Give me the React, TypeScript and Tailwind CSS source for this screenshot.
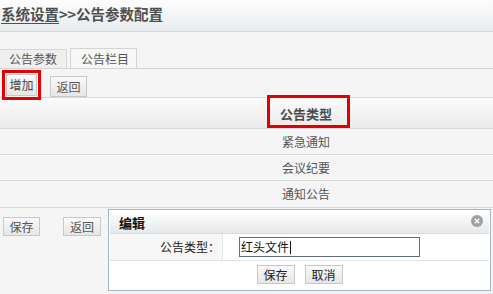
import React from "react";

const btn =
  "flex items-center justify-center border border-[#c8c8c8] bg-gradient-to-b from-[#fafafa] to-[#e6e6e6] text-[12px] leading-none";

export default function App() {
  return (
    <div
      className="w-[493px] h-[294px] overflow-hidden bg-[#f5f5f5] text-[#555]"
      style={{ fontFamily: '"Noto Sans CJK SC", "Noto Sans", sans-serif' }}
    >
      {/* Header */}
      <div className="h-[32px] bg-gradient-to-b from-[#fdfdfd] to-[#e8ebed] border-b border-[#d4d6d8] pl-[1px] pt-[4px]">
        <div className="text-[14.5px] font-bold leading-[20px] text-[#505050]">
          <span className="underline underline-offset-[3px]">系统设置</span>
          <span>&gt;&gt;公告参数配置</span>
        </div>
      </div>

      {/* Tabs */}
      <div className="pt-[16px] border-b border-[#d4d4d4] flex items-end">
        <div className="w-[67px] h-[19px] border-t border-r border-[#d8d8d8] bg-[#efefef] flex items-center pl-[9px] text-[12px] leading-none">
          公告参数
        </div>
        <div className="ml-[3px] w-[67px] h-[20px] border-t border-l border-r border-[#d4d4d4] bg-[#f7f7f7] flex items-center pl-[10px] text-[12px] leading-none">
          公告栏目
        </div>
      </div>

      {/* Button row */}
      <div className="h-[29px] border-b border-[#d8d8d8] flex items-start">
        <div className="relative z-10 mt-[1px] ml-[2px] w-[39px] h-[30px] shrink-0 border-[3px] border-[#e30000] p-[1px]">
          <div className={btn + " w-full h-full text-[#444]"}>增加</div>
        </div>
        <div className={btn + " mt-[7px] ml-[9px] w-[37px] h-[21px]"}>返回</div>
      </div>

      {/* Table header */}
      <div className="relative h-[31px] border-b border-[#d8d8d8] bg-gradient-to-b from-[#fbfbfb] to-[#ebebeb] flex items-center pl-[280px]">
        <span className="text-[13px] font-bold text-[#4a4a4a] leading-none">公告类型</span>
        <div className="absolute left-[267px] top-[-3px] w-[83px] h-[33px] border-[3px] border-[#e30000]" />
      </div>

      {/* Rows */}
      {["紧急通知", "会议纪要", "通知公告"].map((t, i) => (
        <div
          key={t}
          className={
            "border-b border-[#d8d8d8] flex items-center pl-[282px] text-[12px] text-[#555] " +
            (i === 2 ? "h-[27px] border-[#c4ccd4]" : "h-[26px]")
          }
        >
          {t}
        </div>
      ))}

      {/* Bottom area */}
      <div className="flex items-start">
        <div className={btn + " mt-[9px] ml-[3px] w-[37px] h-[19px] shrink-0"}>保存</div>
        <div className={btn + " mt-[9px] ml-[23px] w-[38px] h-[19px] shrink-0"}>返回</div>

        {/* Edit dialog */}
        <div className="relative mt-[1px] ml-[7px] w-[383px] h-[82px] shrink-0 border border-[#a8b6c4] bg-white p-[1px] flex flex-col text-[#222]">
          <div className="h-[23px] border-b border-[#d4dbe2] bg-gradient-to-b from-[#ffffff] to-[#e6e8ea] flex items-center pl-[9px]">
            <span className="text-[13px] font-bold leading-none text-[#111]">编辑</span>
          </div>
          <div className="absolute right-[7px] top-[5px] w-[12px] h-[12px] rounded-full bg-[#a0a0a0] flex items-center justify-center">
            <svg width="6" height="6" viewBox="0 0 6 6">
              <path d="M0.8 0.8 L5.2 5.2 M5.2 0.8 L0.8 5.2" stroke="#fff" strokeWidth="1.4" />
            </svg>
          </div>
          <div className="h-[27px] border-b border-[#dde2e7] flex">
            <div className="w-[113px] bg-[#f7f7f7] border-r border-[#e6e6e6] flex items-center justify-end pr-[2px] text-[12px] leading-none">
              公告类型：
            </div>
            <div className="flex-1 flex items-center pl-[16px]">
              <div className="w-[181px] h-[20px] border border-[#5f6f7f] flex items-center pl-[1px] text-[12px] leading-none text-[#111]">
                红头文件<span className="inline-block w-[1px] h-[13px] bg-[#111] ml-[1px]" />
              </div>
            </div>
          </div>
          <div className="flex-1 flex items-start justify-center gap-[10px] pt-[4px]">
            <div className={btn + " w-[38px] h-[19px] text-[#222]"}>保存</div>
            <div className={btn + " w-[38px] h-[19px] text-[#222]"}>取消</div>
          </div>
        </div>
      </div>
    </div>
  );
}
